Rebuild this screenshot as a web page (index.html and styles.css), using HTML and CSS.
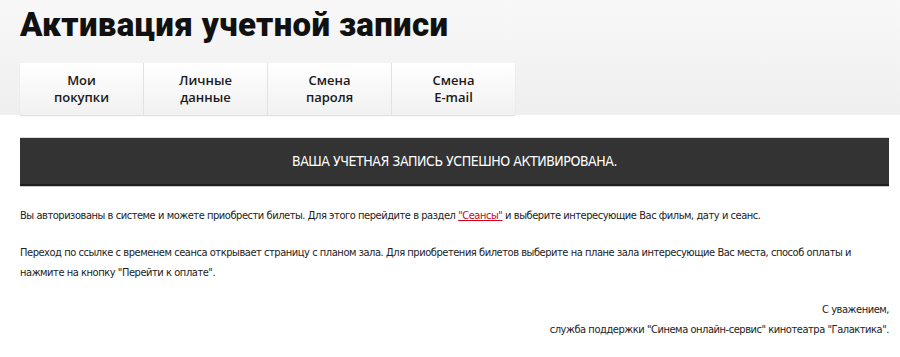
FILE: index.html
```html
<!DOCTYPE html>
<html lang="ru">
<head>
<meta charset="utf-8">
<title>Активация учетной записи</title>
<link rel="stylesheet" href="styles.css">
</head>
<body>
<header class="top">
  <h1 class="title">Активация учетной записи</h1>
  <nav class="tabs">
    <a class="tab" href="#">Мои<br>покупки</a>
    <a class="tab" href="#">Личные<br>данные</a>
    <a class="tab" href="#">Смена<br>пароля</a>
    <a class="tab" href="#">Смена<br>E-mail</a>
  </nav>
</header>
<main class="content">
  <div class="notice">ВАША УЧЕТНАЯ ЗАПИСЬ УСПЕШНО АКТИВИРОВАНА.</div>
  <p class="text">Вы авторизованы в системе и можете приобрести билеты. Для этого перейдите в раздел <a class="link" href="#">"Сеансы"</a> и выберите интересующие Вас фильм, дату и сеанс.</p>
  <p class="text">Переход по ссылке с временем сеанса открывает страницу с планом зала. Для приобретения билетов выберите на плане зала интересующие Вас места, способ оплаты и нажмите на кнопку "Перейти к оплате".</p>
  <p class="text sign">С уважением,<br>служба поддержки "Синема онлайн-сервис" кинотеатра "Галактика".</p>
</main>
</body>
</html>
```
FILE: styles.css
```css
html, body {
  margin: 0;
  padding: 0;
  background: #fff;
}
body {
  font-family: "Liberation Sans", Arial, sans-serif;
  color: #222;
}
.top {
  background: linear-gradient(#f8f8f8, #efefef);
  height: 115px;
  padding: 0 20px;
  box-sizing: border-box;
  display: flex;
  flex-direction: column;
}
.title {
  margin: 0;
  padding-top: 3px;
  font-family: Roboto, "Noto Sans", sans-serif;
  font-weight: 900;
  font-size: 33px;
  line-height: 44px;
  color: #111;
  letter-spacing: 0.35px;
}
.tabs {
  margin-top: 16px;
  display: flex;
  width: 495px;
  height: 52px;
  box-shadow: 0 1px 1px rgba(0,0,0,0.12);
}
.tab {
  flex: 1;
  display: flex;
  align-items: center;
  justify-content: center;
  text-align: center;
  background: linear-gradient(#ffffff, #f1f1f1);
  border-left: 1px solid #e2e2e2;
  font-family: "Open Sans", Roboto, sans-serif;
  font-weight: 600;
  font-size: 13px;
  line-height: 17px;
  padding-bottom: 1px;
  color: #1a1a1a;
  text-decoration: none;
}
.tab:first-child {
  border-left: none;
}
.content {
  padding: 23px 11px 0 20px;
}
.notice {
  background: #333333;
  border-bottom: 2px solid #1f1f1f;
  box-shadow: 0 -1px 0 #ddd, 0 1px 0 #ccc;
  height: 46px;
  display: flex;
  align-items: center;
  justify-content: center;
  color: #fff;
  font-family: "DejaVu Sans Condensed", "Liberation Sans Narrow", sans-serif;
  font-size: 14px;
  letter-spacing: -0.45px;
}
.text {
  margin: 20px 0 0;
  font-family: "DejaVu Sans Condensed", "Liberation Sans Narrow", sans-serif;
  font-size: 11px;
  line-height: 20px;
  letter-spacing: -0.45px;
  color: #222;
}
.text + .text {
  margin-top: 17px;
}
.sign {
  text-align: right;
}
.link {
  color: #d0021b;
}
```
